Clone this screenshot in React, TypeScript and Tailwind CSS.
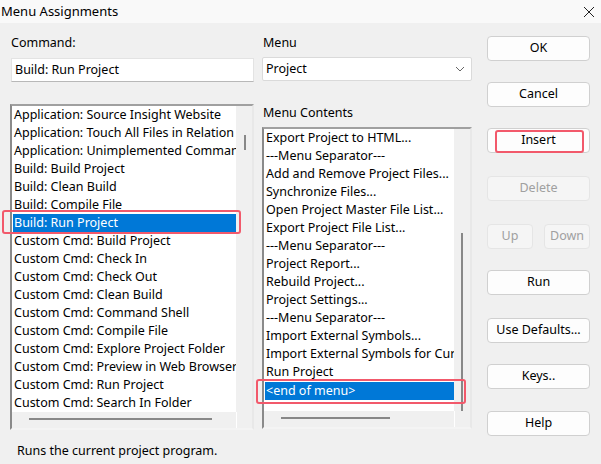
import React from 'react';

const commands = [
  'Application: Source Insight Website',
  'Application: Touch All Files in Relation',
  'Application: Unimplemented Command',
  'Build: Build Project',
  'Build: Clean Build',
  'Build: Compile File',
  'Build: Run Project',
  'Custom Cmd: Build Project',
  'Custom Cmd: Check In',
  'Custom Cmd: Check Out',
  'Custom Cmd: Clean Build',
  'Custom Cmd: Command Shell',
  'Custom Cmd: Compile File',
  'Custom Cmd: Explore Project Folder',
  'Custom Cmd: Preview in Web Browser',
  'Custom Cmd: Run Project',
  'Custom Cmd: Search In Folder',
];

const menuItems = [
  'Export Project to HTML...',
  '---Menu Separator---',
  'Add and Remove Project Files...',
  'Synchronize Files...',
  'Open Project Master File List...',
  'Export Project File List...',
  '---Menu Separator---',
  'Project Report...',
  'Rebuild Project...',
  'Project Settings...',
  '---Menu Separator---',
  'Import External Symbols...',
  'Import External Symbols for Current Project',
  'Run Project',
  '<end of menu>',
];

const Button = ({ label, disabled, mark, className = '' }: { label: string; disabled?: boolean; mark?: boolean; className?: string }) => (
  <div
    className={`relative h-[25px] flex items-center justify-center rounded-[4px] border ${
      disabled ? 'bg-[#f5f5f5] border-[#e5e5e5] text-[#a0a0a0]' : 'bg-[#fdfdfd] border-[#d0d0d0] text-black'
    } ${className}`}
  >
    {label}
    {mark && <div className="absolute z-10 left-[7px] right-[5px] top-[1px] bottom-[-1px] border-2 border-[#f2596b] rounded-[3px]" />}
  </div>
);

const App: React.FC = () => {
  return (
    <div className="w-[601px] h-[464px] bg-[#f0f0f0] text-[12.5px] text-black overflow-hidden" style={{ fontFamily: '"Noto Sans", "Liberation Sans", sans-serif' }}>
      {/* Title bar */}
      <div className="h-[23px] bg-[#f9f9f9] flex items-center justify-between pl-[1px] pr-[5px]">
        <span className="text-[13px] leading-none">Menu Assignments</span>
        <svg width="12" height="12" viewBox="0 0 12 12" className="mr-[1px]">
          <path d="M1 1 L11 11 M11 1 L1 11" stroke="#222" strokeWidth="1" />
        </svg>
      </div>

      <div className="flex pl-[10px]">
        {/* Left column */}
        <div className="w-[244px] flex flex-col">
          <div className="mt-[10px] h-[20px] leading-[20px] pl-[1px]">Command:</div>
          <div className="mt-[5px] h-[24px] ml-[1px] bg-white border border-[#e3e3e3] border-b-[#b8b8b8] flex items-center pl-[3px]">
            Build: Run Project
          </div>
          <div className="mt-[22px] h-[326px] border-2 border-t-[#a0a0a0] border-l-[#8a8a8a] border-r-[#e8e8e8] border-b-[#f4f4f4] bg-white flex flex-col">
            <div className="flex flex-1 min-h-0">
              <div className="flex-1 min-w-0 flex flex-col">
                {commands.map((c) => {
                  const sel = c === 'Build: Run Project';
                  return (
                    <div key={c} className={`relative h-[18px] leading-[18px] ${sel ? 'bg-[#0078d7] text-white ml-[1px]' : ''}`}>
                      <span className={`block overflow-hidden whitespace-nowrap ${sel ? 'pl-[1px]' : 'pl-[2px]'}`}>{c}</span>
                      {sel && (
                        <div className="absolute z-10 left-[-11px] right-[-5px] top-[-4px] bottom-[-2px] border-2 border-[#f2596b] rounded-[3px]" />
                      )}
                    </div>
                  );
                })}
              </div>
              <div className="w-[16px] shrink-0 bg-[#f0f0f0] relative">
                <div className="absolute left-[8px] top-[29px] w-[2px] h-[15px] bg-[#888]" />
              </div>
            </div>
            <div className="h-[16px] flex shrink-0">
              <div className="flex-1 bg-[#f0f0f0] relative">
                <div className="absolute left-[17px] top-[6px] h-[2px] w-[183px] bg-[#888]" />
              </div>
              <div className="w-[16px] bg-[#f0f0f0] border-l border-white" />
            </div>
          </div>
        </div>

        {/* Middle column */}
        <div className="ml-[8px] w-[210px] flex flex-col">
          <div className="mt-[10px] h-[20px] leading-[20px] pl-[1px]">Menu</div>
          <div className="mt-[4px] h-[24px] bg-white border border-[#dadada] rounded-[2px] flex items-center justify-between pl-[3px] pr-[6px]">
            <span>Project</span>
            <svg width="10" height="6" viewBox="0 0 10 6">
              <path d="M1 1 L5 5 L9 1" fill="none" stroke="#666" strokeWidth="1" />
            </svg>
          </div>
          <div className="mt-[22px] h-[20px] leading-[20px] pl-[1px]">Menu Contents</div>
          <div className="mt-[4px] h-[302px] border-2 border-t-[#a0a0a0] border-l-[#8a8a8a] border-r-[#e8e8e8] border-b-[#f4f4f4] bg-white flex flex-col">
            <div className="flex flex-1 min-h-0">
              <div className="flex-1 min-w-0 flex flex-col">
                {menuItems.map((m, i) => {
                  const sel = m === '<end of menu>';
                  return (
                    <div key={i} className={`relative h-[18px] leading-[18px] ${sel ? 'bg-[#0078d7] text-white ml-[1px] mt-[1px] h-[17px] leading-[16px]' : ''}`}>
                      <span className={`block overflow-hidden whitespace-nowrap ${sel ? 'pl-[1px]' : 'pl-[2px]'}`}>{m}</span>
                      {sel && (
                        <div className="absolute z-10 left-[-9px] right-[-12px] top-[-3px] bottom-[-4px] border-2 border-[#f2596b] rounded-[3px]" />
                      )}
                    </div>
                  );
                })}
              </div>
              <div className="w-[16px] shrink-0 bg-[#f0f0f0] relative">
                <div className="absolute left-[7px] top-[104px] w-[2px] bottom-[0px] bg-[#888]" />
              </div>
            </div>
            <div className="h-[16px] flex shrink-0">
              <div className="flex-1 bg-[#f0f0f0] relative">
                <div className="absolute left-[17px] top-[6px] h-[2px] w-[109px] bg-[#888]" />
              </div>
              <div className="w-[16px] bg-[#f0f0f0] border-l border-white" />
            </div>
          </div>
        </div>

        {/* Right column */}
        <div className="ml-[15px] w-[103px] flex flex-col">
          <Button label="OK" className="mt-[13px]" />
          <Button label="Cancel" className="mt-[21px]" />
          <Button label="Insert" mark className="mt-[21px]" />
          <Button label="Delete" disabled className="mt-[23px]" />
          <div className="mt-[23px] flex justify-between">
            <Button label="Up" disabled className="w-[46px]" />
            <Button label="Down" disabled className="w-[46px]" />
          </div>
          <Button label="Run" className="mt-[21px]" />
          <Button label="Use Defaults..." className="mt-[23px]" />
          <Button label="Keys.." className="mt-[21px]" />
          <Button label="Help" className="mt-[22px]" />
        </div>
      </div>

      <div className="pl-[17px] mt-[6px] h-[18px] leading-[18px]">Runs the current project program.</div>
    </div>
  );
};

export default App;
